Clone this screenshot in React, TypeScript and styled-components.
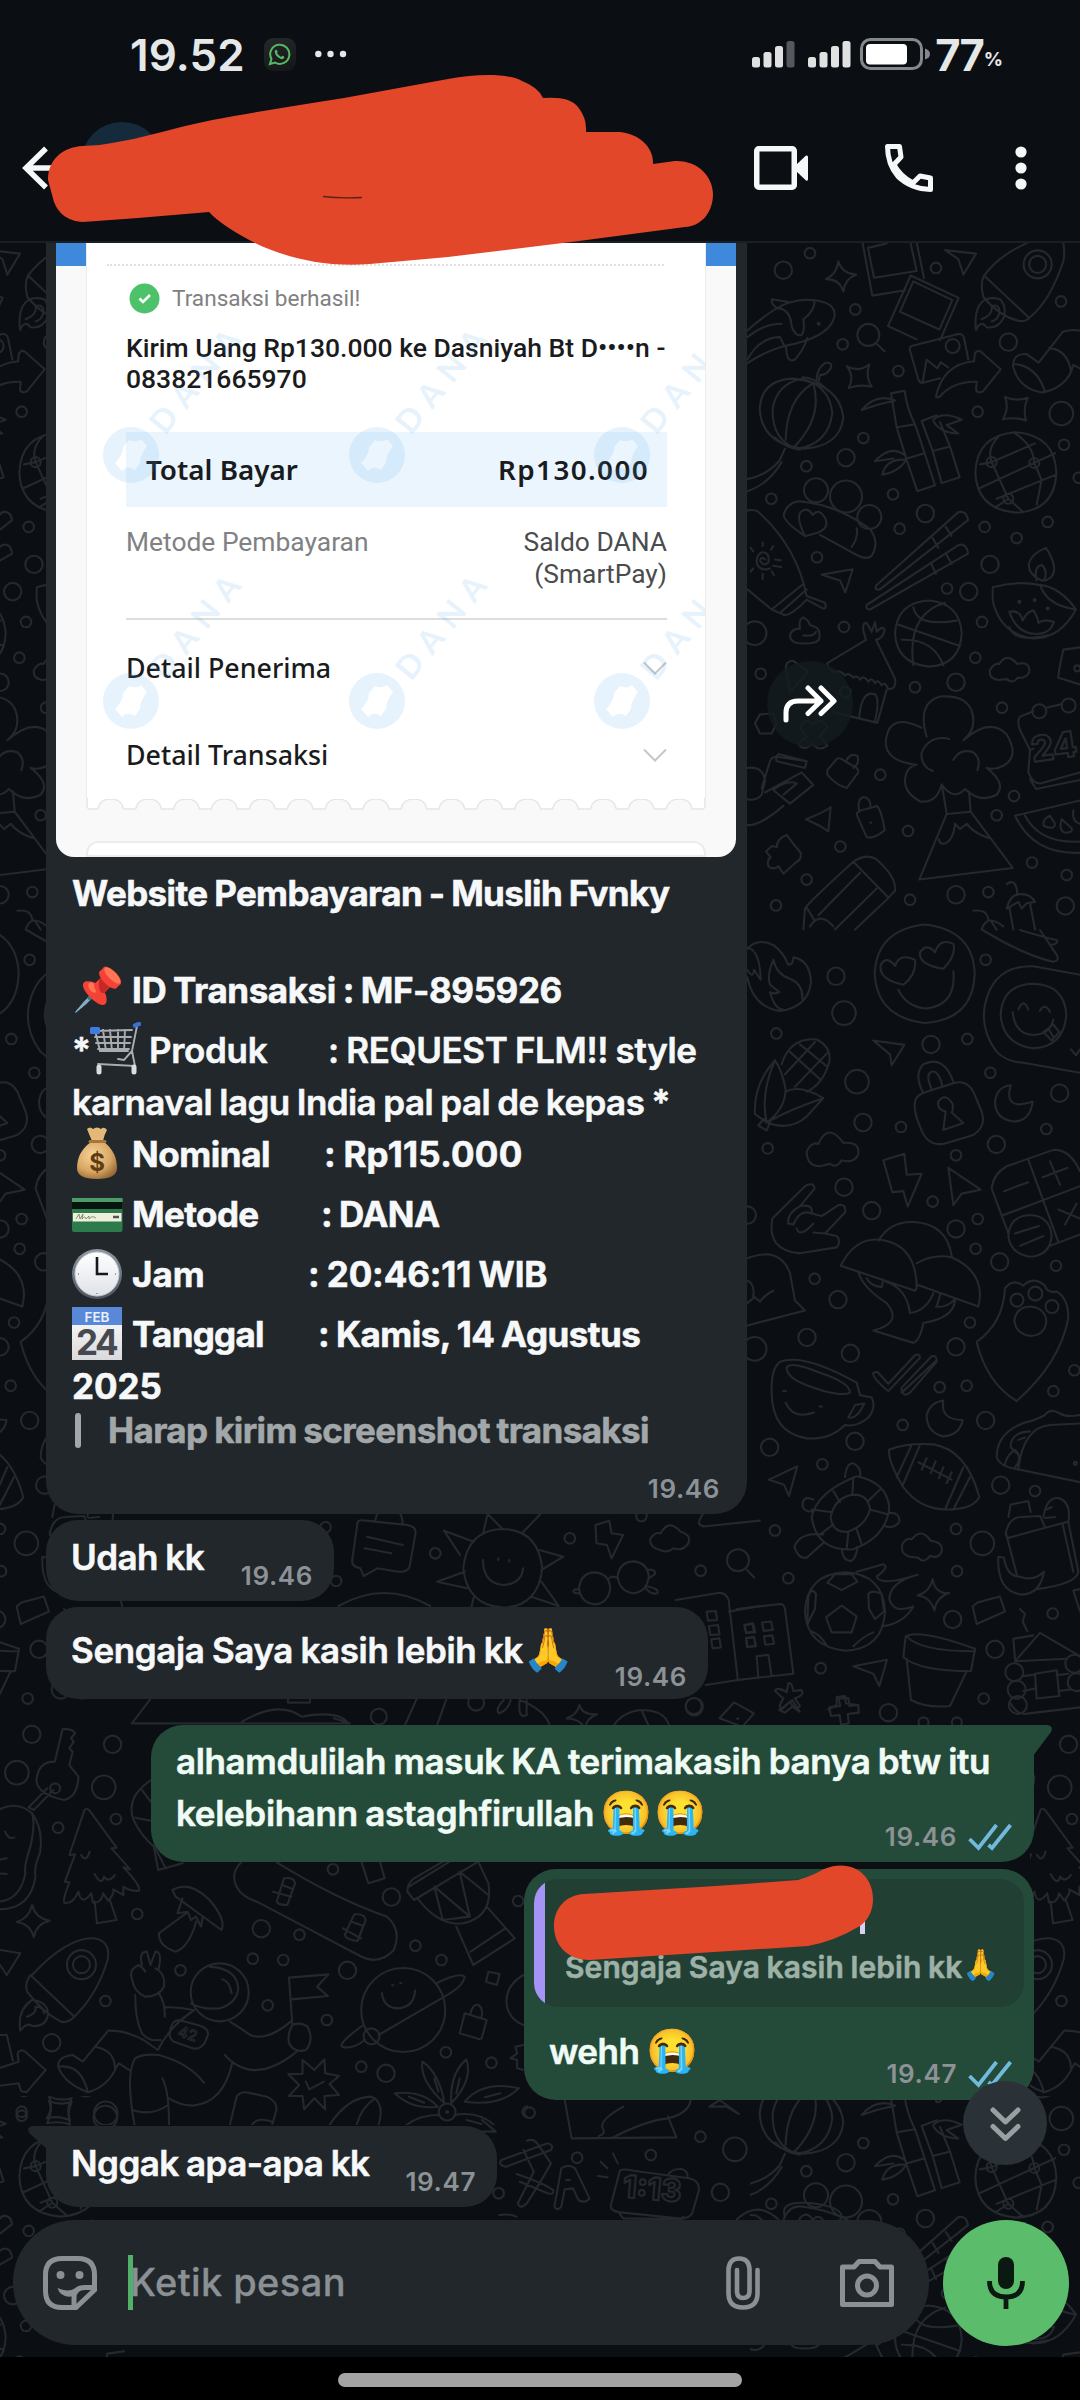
import React from "react";
import styled, { createGlobalStyle } from "styled-components";

const Global = createGlobalStyle`
  * { box-sizing: border-box; }
  body { margin: 0; background: #0b0f14; }
`;

const INTER = `Inter, "Liberation Sans", sans-serif`;

/* ---------- page ---------- */

const Phone = styled.div`
  position: relative;
  width: 1080px;
  height: 2400px;
  overflow: hidden;
  display: flex;
  flex-direction: column;
  background: #0b0f14;
  font-family: ${INTER};
`;

const StatusBar = styled.div`
  height: 108px;
  padding: 0 77px 0 130px;
  display: flex;
  justify-content: space-between;
`;

const StatusGroup = styled.div<{ $gap: number }>`
  display: flex;
  align-items: center;
  height: 108px;
  gap: ${(p) => p.$gap}px;
`;

const Clock = styled.span`
  font-size: 44px;
  font-weight: 600;
  line-height: 54px;
  letter-spacing: 0.1px;
  color: #e6e8e8;
  margin-top: 2px;
`;

const AppChip = styled.div`
  width: 32px;
  height: 33px;
  border-radius: 9px;
  display: flex;
  align-items: center;
  justify-content: center;
  background: linear-gradient(160deg, #262829, #131516);
`;

const Level = styled.div`
  display: flex;
  align-items: baseline;
  height: 54px;
  margin: 2px 0 0 -1px;
`;

const LevelNumber = styled.span`
  font-size: 43.5px;
  font-weight: 700;
  line-height: 54px;
  letter-spacing: -2px;
  color: #e6e8e8;
`;

const LevelSign = styled.span`
  font-size: 19px;
  font-weight: 700;
  color: #e6e8e8;
  transform: translateY(-5px);
  margin-left: 1px;
`;

const Header = styled.header`
  height: 135px;
  padding: 0 53px 14px 21px;
  display: flex;
  align-items: center;
  border-bottom: 2px solid #1a1f23;
`;

const Avatar = styled.div`
  width: 82px;
  height: 82px;
  border-radius: 50%;
  background: #152b3b;
  margin: -10px 0 0 20px;
`;

const HeaderActions = styled.div`
  display: flex;
  align-items: center;
  margin-left: auto;
`;

const Chat = styled.main`
  position: relative;
  height: 2114px;
  display: flex;
  flex-direction: column;
  background: #0b0e13;
`;

const Wallpaper = styled.svg`
  position: absolute;
  inset: 0;
`;

const Messages = styled.section`
  position: relative;
  height: 1977px;
  display: flex;
  flex-direction: column;
`;

const Row = styled.div<{ $top?: number; $mine?: boolean }>`
  position: relative;
  display: flex;
  margin-top: ${(p) => p.$top ?? 0}px;
  padding: 0 46px;
  justify-content: ${(p) => (p.$mine ? "flex-end" : "flex-start")};
`;

const Bubble = styled.div<{ $w: number; $h: number; $mine?: boolean; $corners?: string; $pad?: string; $row?: boolean }>`
  position: relative;
  width: ${(p) => p.$w}px;
  height: ${(p) => p.$h}px;
  padding: ${(p) => p.$pad ?? "0"};
  border-radius: ${(p) => p.$corners ?? "32px"};
  background: ${(p) => (p.$mine ? "#244a39" : "#22272b")};
  display: flex;
  flex-direction: ${(p) => (p.$row ? "row" : "column")};
  justify-content: ${(p) => (p.$row ? "space-between" : "flex-start")};
`;

const Tail = styled.svg<{ $side: "left" | "right" }>`
  position: absolute;
  top: 0;
  ${(p) => p.$side}: -19px;
`;

/* ---------- text ---------- */

const Line = styled.div<{ $h?: number; $margin?: string }>`
  height: ${(p) => p.$h ?? 52}px;
  margin: ${(p) => p.$margin ?? "0"};
  display: flex;
  align-items: flex-end;
  white-space: pre;
`;

const Words = styled.span<{ $w?: number; $bold?: boolean; $ls?: number; $color?: string; $size?: number; $lh?: number }>`
  width: ${(p) => (p.$w ? `${p.$w}px` : "auto")};
  flex: none;
  font-size: ${(p) => p.$size ?? 35}px;
  line-height: ${(p) => p.$lh ?? 52}px;
  font-weight: ${(p) => (p.$bold ? 740 : 640)};
  letter-spacing: ${(p) => (p.$ls ?? 0) - 0.03}px;
  word-spacing: -1px;
  color: ${(p) => p.$color ?? "#f6f8f9"};
  -webkit-text-stroke: 0.55px currentColor;
  white-space: pre;
`;

const Emoji = styled.span<{ $size?: number; $w?: number; $gap?: number; $drop?: number }>`
  width: ${(p) => p.$w ?? 52}px;
  flex: none;
  margin-right: ${(p) => p.$gap ?? 8}px;
  font-family: "Noto Color Emoji", ${INTER};
  font-size: ${(p) => p.$size ?? 42}px;
  line-height: 52px;
  letter-spacing: 0;
  transform: translateY(${(p) => p.$drop ?? 0}px);
`;

const EmojiArt = styled.span<{ $gap?: number }>`
  flex: none;
  width: 51px;
  height: 54px;
  margin-right: ${(p) => p.$gap ?? 9}px;
  display: flex;
`;

const Meta = styled.div<{ $top?: number; $right?: number }>`
  align-self: flex-end;
  flex: none;
  display: flex;
  align-items: center;
  gap: 11px;
  height: 32px;
  margin-top: ${(p) => p.$top ?? 0}px;
  margin-right: ${(p) => p.$right ?? 0}px;
  font-size: 26px;
  line-height: 32px;
  font-weight: 600;
  letter-spacing: 0.6px;
  color: #8c9296;
`;

const Caption = styled.div`
  display: flex;
  flex-direction: column;
  padding: 10px 0 0 26px;
`;

const QuoteLine = styled.div`
  display: flex;
  align-items: center;
  gap: 27px;
  height: 36px;
  padding-left: 3px;
`;

const QuoteBar = styled.i`
  width: 6px;
  height: 35px;
  border-radius: 3px;
  background: #a2a7a9;
`;

const Reply = styled.div`
  display: flex;
  height: 128px;
  margin: 10px 10px 0;
  border-radius: 24px;
  overflow: hidden;
  background: #223f33;
`;

const ReplyBar = styled.i`
  width: 11px;
  background: #a594f5;
`;

const ReplyText = styled.div`
  display: flex;
  align-items: flex-end;
  padding: 0 0 19px 20px;
`;

const ForwardButton = styled.button`
  width: 86px;
  height: 86px;
  margin: 418px 0 0 20px;
  padding: 0;
  border: 0;
  border-radius: 50%;
  background: rgba(19, 28, 32, 0.82);
  display: flex;
  align-items: center;
  justify-content: center;
`;

const ScrollDown = styled.button`
  position: absolute;
  right: 33px;
  top: 1838px;
  width: 84px;
  height: 84px;
  padding: 4px 0 0;
  border: 0;
  border-radius: 50%;
  background: #2a3238;
  display: flex;
  align-items: center;
  justify-content: center;
`;

/* ---------- receipt ---------- */

const Receipt = styled.div`
  width: 680px;
  height: 614px;
  margin: 0 0 0 10px;
  border-radius: 0 0 18px 18px;
  overflow: hidden;
  background: linear-gradient(#3f89dd 0 23px, #f9f9f9 23px);
  display: flex;
  flex-direction: column;
  font-family: Roboto, sans-serif;
  color: #1a1b1d;
`;

const Paper = styled.div`
  position: relative;
  width: 620px;
  height: 557px;
  margin-left: 30px;
  padding: 0 38px 0 39px;
  background: #fff;
  border: 1px solid #ececec;
  border-width: 0 1px;
  display: flex;
  flex-direction: column;
`;

const Watermark = styled.svg`
  position: absolute;
  left: 0;
  top: 0;
`;

const Dots = styled.div`
  height: 23px;
  margin: 0 3px 0 -19px;
  border-bottom: 2px dotted #e0e0e0;
`;

const Success = styled.div`
  position: relative;
  display: flex;
  align-items: center;
  gap: 12px;
  height: 32px;
  margin-top: 16px;
  padding-left: 3px;
  font-size: 22.6px;
  color: #7f8081;
`;

const Title = styled.div`
  position: relative;
  margin-top: 18px;
  font-size: 26.5px;
  font-weight: 500;
  line-height: 31px;
  white-space: pre;
`;

const Total = styled.div`
  display: flex;
  justify-content: space-between;
  align-items: center;
  height: 75px;
  margin-top: 38px;
  padding: 0 18px 2px 20px;
  background: #ebf5fe;
  font-family: "Noto Sans", sans-serif;
  font-weight: 600;
  font-size: 27.8px;
  line-height: 38px;
`;

const Amount = styled.span`
  letter-spacing: 1.4px;
`;

const Method = styled.div`
  position: relative;
  display: flex;
  justify-content: space-between;
  margin-top: 19px;
  margin-bottom: 1px;
  font-size: 26.4px;
  line-height: 32px;
  color: #808183;
`;

const MethodValue = styled.span`
  text-align: right;
  color: #4b4c4e;
`;

const Divider = styled.div`
  height: 2px;
  margin-top: 27px;
  margin-bottom: 4px;
  background: #dcdddd;
`;

const Detail = styled.div`
  position: relative;
  display: flex;
  align-items: center;
  justify-content: space-between;
  height: 87px;
  font-family: "Noto Sans", sans-serif;
  font-weight: 500;
  font-size: 26.8px;
`;

const NextPaper = styled.div`
  width: 620px;
  height: 20px;
  margin: 29px 0 0 30px;
  border: 2px solid #ececec;
  border-radius: 12px 12px 0 0;
  background: #fff;
`;

const Edge = styled.svg`
  display: block;
  flex: none;
  margin-left: 30px;
`;

/* ---------- composer ---------- */

const Composer = styled.footer`
  position: relative;
  display: flex;
  gap: 14px;
  padding: 0 11px 0 13px;
`;

const InputBox = styled.div`
  width: 916px;
  height: 125px;
  border-radius: 62px;
  background: #22272b;
  display: flex;
  align-items: center;
  padding: 0 35px 0 29px;
`;

const Caret = styled.i`
  width: 5px;
  height: 55px;
  margin: 0 -3px 0 30px;
  background: #53b069;
`;

const Placeholder = styled.span`
  flex: 1;
  font-size: 38px;
  font-weight: 540;
  line-height: 55px;
  color: #8a9094;
  letter-spacing: 0.4px;
  -webkit-text-stroke: 0.3px currentColor;
`;

const MicButton = styled.button`
  width: 126px;
  height: 126px;
  padding: 0;
  border: 0;
  border-radius: 50%;
  background: #5bbd6c;
  display: flex;
  align-items: center;
  justify-content: center;
`;

const NavBar = styled.div`
  height: 43px;
  background: #000;
  display: flex;
  justify-content: center;
  padding-top: 16px;
`;

const NavPill = styled.div`
  width: 404px;
  height: 14px;
  border-radius: 7px;
  background: #a4a4a4;
`;

const Redaction = styled.svg`
  position: absolute;
  left: 0;
  top: 0;
  pointer-events: none;
`;

/* ---------- wallpaper doodles ---------- */

type Ring = [number, number, number];

interface DoodleProps {
  x: number;
  y: number;
  sx: number;
  sy: number;
  paths: string;
  small?: number[][];
  medium?: number[][];
  large?: number[][];
  rings?: number[][];
}

function Doodles({ x, y, sx, sy, paths, small = [], medium = [], large = [], rings = [] }: DoodleProps) {
  const all: Ring[] = [
    ...small.map((c) => [c[0], c[1], 5.3] as Ring),
    ...medium.map((c) => [c[0], c[1], 8.7] as Ring),
    ...large.map((c) => [c[0], c[1], 11.8] as Ring),
    ...rings.map((c) => [c[0], c[1], c[2]] as Ring),
  ];
  return (
    <g transform={`translate(${x} ${y})`}>
      <path d={paths} transform={`scale(${sx} ${sy})`} vectorEffect="non-scaling-stroke" />
      {all.map((c, i) => (
        <circle key={i} cx={c[0] * sx} cy={c[1] * sy} r={c[2]} />
      ))}
    </g>
  );
}

const TOP_PATHS = `
M368 30L397 147L495 135M552 108L530 28M384 40L402 107L530 92L512 30M384 40L440 30
M512 102L656 152L600 247M512 102L444 215L530 245M520 115L637 157L598 223L480 183Z
M515 260Q505 262 512 275L535 335Q540 345 555 341L600 332M515 260L655 233Q668 232 672 242L685 290M548 340L560 290L592 310L602 296L625 308
M588 372Q610 300 702 294L705 276Q712 268 722 272L782 312L728 362Q712 366 708 358L710 340Q640 338 598 374Q588 376 588 372Z
M295 70Q305 97 348 100Q315 108 310 138Q300 110 257 110Q290 100 295 70Z
M320 305Q355 320 388 301Q375 328 395 351Q360 345 326 354Q345 328 320 305Z
M795 374Q828 385 863 376Q848 400 858 427Q828 418 789 424Q808 398 795 374Z
M615 45L708 53L670 100L655 65Z
M860 30Q780 55 732 102Q720 120 730 150Q780 195 840 204Q860 205 870 195Q930 160 970 70Q975 50 970 30M732 102L868 197M738 155Q700 170 708 224Q722 200 740 218Q775 222 792 195Q800 170 780 155Q755 150 738 155ZM725 200Q760 190 755 170Q780 165 778 185Q775 200 755 205
M1020 225Q990 222 968 228L896 297L860 278Q820 275 819 305Q835 355 905 364Q970 355 993 318L1000 302L1020 310M928 264Q985 270 993 318M822 300Q890 305 914 360
M22 225Q60 200 96 182Q160 150 230 158Q290 165 283 195Q270 235 165 255Q90 265 22 298M96 155Q92 165 110 175Q150 175 155 215Q165 240 185 235Q195 225 190 200Q225 180 223 160M96 155L150 162M22 240Q70 210 125 210M22 290Q60 240 120 240L132 258M138 262Q140 300 165 290Q190 270 202 242
M410 255L434 272
M59 400Q65 335 160 333Q300 345 310 420Q300 485 190 490Q65 480 59 400ZM98 400Q110 345 185 333Q270 350 277 410Q265 480 170 490Q95 470 98 400ZM220 345Q250 420 160 488M215 345Q140 380 137 470M230 335Q230 310 255 298Q280 295 272 310Q260 325 240 325L236 338M188 330Q220 330 258 355M105 465Q140 490 180 492M135 490L118 517Q80 550 22 558M125 520Q85 570 22 585
M365 403Q410 365 465 382L410 392ZM453 366L494 360Q500 400 525 435L554 500L585 572L532 585L500 515L470 442ZM470 442L525 435M500 512L554 500M494 504Q450 480 405 518L460 512M500 515Q440 510 427 548Q470 545 500 515M545 428L590 415M545 428L578 495L605 567L659 554L630 485L600 430M578 495L630 485M580 425Q610 405 665 425L620 437L655 456Q600 455 580 428
M706 543Q710 460 827 453Q945 460 949 543Q945 630 827 633Q710 625 706 543ZM720 578L945 500M770 602L948 548M755 520L885 478M755 520L805 602L850 632M883 522L905 560L890 615M883 522Q880 480 820 453M755 520Q740 490 775 463M720 525L755 520M805 602L765 622
M190 683Q125 650 132 635Q150 600 200 610Q300 620 390 670Q420 700 395 730Q380 740 350 728L240 683M350 668Q355 690 335 710M195 686Q165 640 185 630Q205 620 218 638Q240 620 258 650Q265 670 232 678Z
M22 628Q50 625 60 635Q170 710 200 820L255 835Q262 848 250 848L200 828M22 805L95 850L135 863Q160 860 200 828M95 850L190 793M120 858L200 805M68 700L68 708M68 770L68 782M32 712L40 720M100 708L93 716M105 738L122 740M100 752L123 755M32 765L40 758M95 765L102 773M75 738Q65 730 60 740Q70 755 85 745Q90 720 65 722Q45 730 52 750Q65 765 90 758
M410 795L655 632Q680 628 684 650L420 805Q400 808 410 795M380 840L655 706Q680 700 684 725L390 850Q376 850 380 840M578 690L595 712M617 665L635 685M572 745L588 770M618 725L635 748
M245 772L338 760L316 812L300 785Z
M188 868Q205 872 210 885Q240 890 238 905Q245 928 195 926Q150 928 150 908Q155 893 180 893Q175 875 188 868ZM190 908Q220 912 228 900
M465 904Q470 835 565 830Q660 835 665 904Q660 975 565 978Q470 970 465 904ZM472 883L660 932M520 975Q500 860 615 835M610 975Q580 915 485 918M520 845Q530 890 650 875
M758 800Q830 785 900 795Q960 800 1008 850Q960 915 880 915Q780 905 758 830ZM900 795Q920 840 1005 850M905 785Q860 770 868 745Q875 725 918 712Q960 760 930 780Q915 787 905 785M890 785Q880 755 905 750Q925 765 912 785M808 855Q840 850 848 875Q860 855 880 852Q895 870 895 880Q915 870 942 878Q930 905 890 905Q830 905 808 855ZM808 890Q825 925 925 908
M262 970L378 918Q360 880 380 880L395 900L405 878L410 900Q430 885 434 895Q430 915 408 918L465 1005Q470 1030 445 1028Q435 1010 425 1020Q415 1005 405 1015Q395 1000 385 1012Q370 995 360 1007Q350 995 340 1003Q325 990 315 998Q300 985 285 990Q262 985 262 970M440 1030L412 1104L280 1080M358 1090Q365 1030 405 1040Q420 1050 405 1100
M775 1008Q745 1005 750 985Q765 968 778 972Q800 945 832 972Q870 965 868 990Q860 1005 832 1003Q820 1018 800 1006Z
M1020 935L970 940Q955 990 955 1003L1020 1018
M840 1090L880 1078M918 1070L965 1062M840 1090Q830 1100 840 1120L870 1165L865 1215Q878 1240 900 1240L1020 1215M870 1165L880 1162M870 1230L888 1252L1020 1232
M560 1135Q530 1060 600 1045Q700 1040 700 1100Q700 1125 670 1143Q750 1090 800 1130Q840 1180 790 1200Q765 1210 740 1205Q800 1240 770 1265Q720 1285 675 1252Q640 1280 605 1242Q590 1285 540 1280Q480 1255 500 1215Q510 1200 530 1198Q430 1190 438 1140Q450 1080 545 1115M578 1212Q540 1200 545 1170Q570 1130 628 1140M640 1187Q660 1160 700 1170Q725 1185 712 1210
M607 1248L620 1308L538 1455L818 1429L692 1303L687 1258M620 1308L692 1303M597 1365Q598 1375 610 1375Q640 1370 645 1330L660 1342L680 1330Q700 1350 745 1362
M1020 1278L825 1312Q880 1400 1020 1395M855 1312Q900 1375 1020 1370M930 1312Q905 1320 912 1335Q945 1345 945 1330ZM965 1320Q955 1345 975 1350Q1000 1350 995 1340ZM1000 1300Q995 1325 1020 1330
M78 1392L95 1380L110 1382Q112 1362 140 1355L160 1375L182 1395Q185 1410 170 1415L130 1442L115 1425Q100 1435 85 1425Q80 1410 92 1405Z
M350 1310Q350 1300 380 1297L410 1290Q425 1300 434 1345Q400 1365 380 1360ZM358 1303Q350 1275 370 1270Q392 1272 392 1292M391 1327L393 1328
M262 1210L290 1185Q300 1180 315 1190L350 1205Q360 1215 350 1220L320 1250Q290 1245 262 1220ZM318 1190Q330 1170 352 1178Q360 1195 340 1205
M198 1320Q250 1305 272 1293L265 1347L240 1335Z
M190 1567L195 1520Q200 1510 340 1415Q380 1395 410 1410Q470 1450 465 1480L440 1500L345 1567M200 1518L225 1548M340 1415L445 1495M235 1535L360 1440M285 1567L410 1475M210 1560Q240 1525 280 1560
M45 1105L60 1085L100 1083L110 1105L95 1128L60 1128Z
M138 985Q135 965 160 965L205 990L150 1035ZM180 1115Q195 1090 218 1108Q240 1090 262 1112L240 1135L262 1155Q235 1170 218 1150Q190 1170 175 1150L200 1135Z
M65 1250L90 1190Q95 1180 110 1180L200 1190L195 1205L110 1190Q105 1180 115 1174L200 1190M75 1260L185 1215L220 1243L150 1285L100 1255Q140 1230 170 1240L130 1265M22 1205Q70 1200 75 1235L65 1265Q50 1280 22 1275M22 1333Q60 1335 130 1290
M800 1465Q830 1450 832 1490M800 1520Q810 1490 835 1488Q870 1485 885 1505L860 1508L845 1520L835 1505ZM808 1518L820 1567M870 1508L885 1567M700 1525Q740 1520 745 1545M725 1567Q740 1530 790 1560M755 1550L770 1567`;

const MID_PATHS = `
M22 38Q50 15 100 30Q130 45 145 70Q160 70 160 55Q210 60 213 105Q205 155 120 163Q40 155 22 95M22 35Q60 40 62 100L42 80Q40 100 22 80M100 60Q110 90 150 98Q190 110 187 138M100 60Q80 90 90 110L118 125Q100 130 90 125Q105 160 130 160
M105 262Q40 310 45 370L80 387Q135 360 137 320Q125 280 105 262M80 387Q60 330 105 262M80 387Q150 405 200 375L250 338Q180 310 137 325M80 387Q150 360 250 338M125 270Q150 215 230 220Q275 235 268 265Q250 310 200 325M150 245L240 300M180 230L262 275M135 290L225 225M165 315L265 245M55 393L80 403L90 387L70 380Z
M404 88Q410 0 554 -11Q700 0 704 88Q700 180 554 187Q410 175 404 88ZM475 120Q500 155 560 158Q650 150 640 83M490 110Q415 100 422 70Q440 50 465 72Q480 45 525 60Q530 90 490 110ZM610 78Q535 70 540 45Q560 25 585 45Q600 15 640 28Q650 50 610 78Z
M728 0Q850 50 940 64Q960 62 950 50L900 0M840 0Q940 20 950 20Q955 30 930 30
M1020 90L880 73Q760 70 735 150Q720 200 770 245Q800 265 850 267L1020 287M782 172Q785 110 880 108Q975 110 979 172Q970 235 880 238Q790 230 782 172ZM818 165Q825 210 880 211Q930 210 940 180M835 160Q850 135 865 160M900 162Q915 145 930 165M910 205L940 190L958 205L935 222ZM925 198L940 215M993 240L1008 252L1020 240
M400 222L493 231L455 272L450 250Z
M525 345Q520 365 540 395Q560 435 610 430L700 412Q740 395 725 365L700 325Q680 300 640 308L560 325Q530 330 525 345ZM550 328Q520 290 550 270Q610 250 640 305M575 320Q555 290 575 285Q595 280 608 315M610 402L617 365Q590 360 595 345Q615 325 638 350Q640 362 635 367L670 388Z
M812 312Q790 365 878 345Q870 385 820 385Q765 380 765 345Q770 315 812 312ZM610 946Q600 985 668 985Q660 1015 610 1018Q560 1010 560 975Q570 950 610 946Z
M240 475Q200 475 200 445Q215 425 235 430Q265 385 310 428Q360 425 355 450Q345 470 305 463Q290 480 270 470ZM510 1260Q480 1255 487 1235Q500 1220 515 1225Q545 1200 572 1228Q610 1230 605 1250Q595 1265 570 1258Q550 1275 535 1262Z
M430 463L493 450L500 492L545 490L503 556L490 525L457 527Z
M625 478L722 522L665 530L640 553Z
M180 650Q80 645 97 580L195 515Q220 505 224 520L180 555Q220 550 215 570L245 575L295 553Q320 550 315 568L255 610L290 615Q305 625 290 638ZM145 590Q140 570 180 555M145 590L160 592Q180 560 215 570M170 600Q180 620 220 590M220 608L255 610
M755 520Q760 490 800 475L940 442Q990 440 1020 485M755 520L805 610M790 573L1020 515M865 462L955 627M930 635L1020 612M805 615Q808 575 870 573Q930 575 935 615Q930 655 870 657Q810 650 805 615ZM825 610L897 595M840 635L910 615M792 525L865 507M908 497L983 478M930 465L960 512M955 562L1020 580M1010 550L975 592
M302 675Q350 610 440 625Q530 640 530 720L525 725ZM415 625Q450 585 520 587Q620 590 635 655M530 670Q580 650 635 658Q740 690 715 757L532 713M355 688Q370 720 440 750Q490 790 400 805L520 830Q540 825 550 790Q640 780 645 745M437 707Q500 720 510 770Q560 765 580 730M380 700Q390 715 425 718L428 708M590 757L602 730M588 757Q620 760 645 742
M22 660Q120 635 150 690L165 745L195 765L22 795M22 705Q45 710 40 740L22 750M38 735L60 747Q80 730 100 725
M120 868Q190 850 350 910L360 935L395 940Q410 960 385 980Q350 1000 315 995Q270 1025 200 1022Q90 1010 95 920Q95 880 120 868ZM140 880Q150 865 240 890Q330 910 330 930Q300 940 200 915Q140 900 140 880ZM325 980L345 955L373 952Q350 985 325 980M137 950Q160 985 222 970M130 927L138 927M238 958L246 958
M400 890Q395 900 445 927L540 860Q540 850 525 855L445 912L412 888ZM485 930L590 865Q590 855 575 857L485 920ZM485 925Q490 940 510 930L590 868
M710 828Q790 790 795 720Q820 700 850 715Q880 695 915 715Q920 730 950 727Q985 740 985 780Q960 870 830 947Q740 910 710 828ZM823 786Q828 758 871 757Q915 760 919 786Q915 815 871 816Q828 812 823 786Z
M447 1045Q500 1030 580 1034Q680 1045 718 1140Q700 1165 620 1165Q540 1165 490 1120Q445 1070 447 1045ZM515 1035L470 1100M540 1035L487 1118M670 1080L617 1162M690 1100L640 1165M535 1070L635 1105M560 1062L545 1085M587 1068L572 1092M610 1080L597 1102M635 1090L620 1112
M1020 975Q980 980 960 972Q930 960 915 975Q890 985 855 990Q770 1010 770 1060Q780 1080 840 1085L1020 1110M835 1083Q850 1000 930 995L1020 992M795 1075Q800 1055 825 1045Q850 1060 825 1080M870 1008Q810 1010 812 1040L835 1055M835 1025L855 1020
M87 1105L172 1078L147 1138L132 1115Z
M215 1180Q230 1130 350 1098Q440 1110 448 1160Q440 1220 340 1245Q230 1250 215 1180ZM272 1180Q285 1140 340 1135Q385 1135 390 1165Q375 1200 320 1210Q275 1210 272 1180ZM280 1128L300 1150M340 1100L337 1135M420 1125L385 1148M445 1175L390 1165M365 1235L350 1205M320 1245L325 1212M240 1215L280 1195M215 1165L272 1170M315 1100Q320 1070 340 1072Q365 1080 360 1100M220 1145Q185 1135 188 1160Q200 1172 218 1168M448 1172Q480 1170 478 1190Q460 1205 435 1198M250 1215Q180 1210 163 1240Q175 1265 200 1262L250 1232M305 1245Q310 1270 335 1268Q350 1260 352 1240
M195 1370Q200 1295 315 1291Q430 1295 435 1370Q430 1445 315 1449Q200 1440 195 1370ZM258 1382L305 1358L350 1380L335 1412L275 1412ZM262 1312L305 1327L352 1310L335 1295L285 1295ZM385 1335Q395 1325 425 1335L432 1370L405 1385L387 1365ZM202 1395L205 1340Q215 1320 228 1335L225 1365ZM215 1410Q240 1415 262 1440M340 1440Q370 1420 400 1412M350 1290L430 1275Q450 1280 410 1300Q420 1320 533 1296Q450 1310 448 1345Q460 1375 520 1360Q490 1395 425 1400
M578 1305Q585 1335 628 1333Q590 1340 583 1368Q570 1340 533 1338Q570 1330 578 1305Z
M797 1215Q805 1180 845 1180L900 1178L915 1200M805 1222L980 1190M797 1210L832 1300M968 1195L1000 1290M910 1180Q920 1140 955 1142Q995 1150 985 1190L1015 1290Q1010 1315 890 1325M935 1160L920 1165M945 1180L915 1182M805 1180L812 1155L865 1148L872 1170M775 1260Q770 1330 845 1336Q900 1335 912 1290Q880 1310 840 1300Q800 1300 792 1262Z
M698 1360L712 1352L780 1340L795 1370L710 1395Z
M1020 1325L1000 1328L1020 1370
M-10 1365L120 1355Q132 1355 135 1365L160 1495L-10 1508M13 1397L40 1395L46 1412L18 1413ZM66 1392L93 1390L99 1407L71 1409ZM18 1423L43 1422L48 1440L22 1441ZM72 1420L97 1418L102 1435L76 1437ZM50 1460L85 1457L95 1500M50 1460L55 1504
M340 1480L441 1467L418 1520L400 1495Z
M497 1420Q540 1405 705 1445L693 1490Q540 1490 490 1462ZM500 1465L513 1548Q560 1565 630 1560L680 1490M500 1420Q540 1450 705 1450
M820 1425L880 1418M825 1470L900 1413L1020 1460M820 1425L825 1465M825 1470L980 1465M885 1495L950 1488L958 1540L890 1545ZM850 1500L885 1497M850 1530L885 1525M950 1498L985 1495M955 1530L990 1527M840 1365L855 1375L848 1390L862 1410
M105 1530Q110 1520 140 1532L145 1515Q155 1510 160 1530L185 1528Q195 1538 165 1545L180 1560Q170 1570 150 1552L125 1567Q112 1562 130 1545ZM265 1567L290 1558L290 1542L315 1540L318 1555L355 1558`;

const LOW_PATHS = `
M162 125L185 28Q215 25 222 40L210 55L218 65L205 85L215 95L205 135L232 170Q230 230 190 240Q115 225 108 185Q110 125 162 125ZM158 210L100 270L85 262L140 205
M-5 270Q50 240 95 280Q105 310 90 380Q70 440 75 460Q60 540 -5 545M95 280Q130 330 118 400Q100 440 105 470Q90 570 -5 568M15 335Q25 360 42 352M-5 420L20 415M-5 460L20 462
M250 270L205 405L222 403L192 485L205 487Q185 540 190 548Q215 555 232 515Q240 560 270 520L275 548Q300 550 305 520L320 542Q340 520 335 508L365 525L365 500Q385 515 412 512Q415 495 365 442L385 448L330 385L345 383L265 272Q257 262 250 270ZM280 545L287 610L345 600L325 540M240 405Q255 430 265 395M280 462Q300 500 308 470Q320 490 340 465
M95 555Q105 595 147 602Q108 610 100 652Q90 612 50 606Q85 595 95 555Z
M450 178Q370 230 395 300Q420 350 455 380L468 450L540 430M400 293L450 303M420 210L450 250M455 375L490 445
M715 425Q680 460 700 500Q715 530 760 545L1060 705Q1120 740 1165 690Q1190 630 1145 590Q1000 540 820 428M840 475Q870 470 873 490L850 555Q815 555 820 540ZM808 515L862 530M835 495L868 508M1048 583Q1080 580 1082 600L1058 663Q1025 660 1020 645ZM1015 625L1068 655M1040 605L1075 618
M510 510Q560 480 620 540Q670 600 655 630L520 530ZM540 535L525 580L555 575L565 600L580 590L595 620L600 590M550 580L470 640Q470 680 520 695Q560 680 580 605
M1205 515L1225 540L1410 428M1205 515Q1205 490 1225 475L1310 425M1210 500L1330 425M1235 535Q1300 620 1370 610Q1460 590 1445 490L1415 425M1285 500L1310 600L1390 590L1360 455L1445 525M1285 500L1390 590M1350 620L1400 735L1523 655L1440 560M1392 695L1495 625M1070 428L1090 490L1138 475L1125 428
M95 765Q200 650 280 655Q330 665 318 720Q290 820 220 890Q200 910 180 905Q130 880 80 815Q72 790 90 765ZM90 765L220 890M95 840Q50 870 60 932Q80 905 95 918Q140 920 142 880Q140 845 95 840ZM80 890Q110 880 105 860Q130 860 130 880
M0 690L60 700L20 765L0 735
M390 775Q380 750 410 735Q425 745 430 755M420 735Q410 695 435 695L445 735L460 695Q480 695 470 745M460 745Q490 760 485 800Q470 830 430 830Q395 815 390 775M400 825Q400 900 420 940Q440 965 475 960M470 820Q490 850 487 890M487 862Q530 860 570 870M658 778Q680 785 685 820M565 850Q600 870 650 865Q700 850 705 805Q700 745 620 740M575 870Q500 920 467 990L425 960Q370 930 320 932L245 1025L215 1005Q170 1010 172 1040Q190 1090 260 1117Q320 1100 345 1040L352 1030L385 1052M280 980Q340 990 340 1045M172 1040Q240 1030 260 1117M680 905Q720 930 740 945Q790 965 860 905M865 915Q850 940 855 970Q870 1000 905 990Q930 960 910 920Q890 905 865 915M878 995Q750 1100 665 1005M687 1030Q660 1150 570 1157Q530 1155 500 1135M398 1215Q370 1060 400 1015Q420 1000 470 1005Q560 1030 603 1088M480 1075Q500 1110 500 1215M390 1170Q450 1190 497 1155M530 900L595 918Q618 928 615 945L605 970Q590 990 570 985L515 965Q498 955 503 935Q508 900 530 900Z
M865 915L855 773L972 763L938 800L970 828L862 838
M1290 790Q1360 755 1375 770Q1370 800 1315 830L1120 945M1075 915Q1000 970 1012 980Q1040 990 1080 960M1130 820Q1135 865 1180 865Q1225 860 1228 812M1160 795L1163 796M1184 789L1187 790
M1375 880L1440 900L1425 955Q1420 960 1410 955L1360 940ZM1392 880Q1400 850 1415 855Q1430 865 1425 890M1445 755L1478 762L1470 795L1438 785Z
M-5 1045L55 1025L52 1000Q60 985 75 995L135 1050L80 1115Q60 1118 60 1105L55 1090L-5 1098M-5 945L20 945L38 1022
M145 1130Q178 1145 212 1135Q195 1165 207 1202Q175 1185 138 1195Q160 1165 145 1130Z
M895 1020L930 1050L960 1018L962 1060L1003 1068L975 1092L1003 1125L960 1128L962 1168L930 1135L900 1168L895 1128L855 1128L885 1095L853 1062L895 1062ZM905 1085L915 1108L958 1085
M1315 1150Q1240 1080 1250 1025Q1300 1060 1315 1150M1335 1150Q1330 1060 1380 1018Q1400 1080 1335 1150M1375 1145Q1430 1080 1535 1105Q1480 1160 1375 1145M1295 1160Q1220 1170 1168 1120Q1250 1110 1295 1160M1345 1185Q1430 1170 1480 1235L1420 1230M1200 1217Q1240 1185 1295 1185M1285 1075L1297 1115M1360 1075L1350 1120M1210 1130L1255 1148M1435 1132L1480 1120M1380 1200L1425 1212
M680 1215L700 1130Q710 1115 730 1117L790 1130Q820 1145 818 1170L805 1215M745 1215Q760 1190 805 1205M975 1215Q1030 1130 1100 1130Q1140 1150 1120 1215M1055 1215Q1070 1160 1110 1135
M1548 765Q1490 800 1500 860Q1510 900 1548 915M1548 975L1525 980L1530 1000L1510 1015L1530 1020L1530 1045L1548 1050`;

const GAP_PATHS = `
M692 65Q695 58 710 62L800 75Q820 80 818 100L805 200Q800 218 780 215L735 205L705 228L698 205Q678 200 680 180ZM712 110L790 135M707 145L765 160M730 62Q735 25 760 15Q790 30 790 72
M922 205Q930 90 1008 87Q1085 90 1094 205Q1085 320 1008 323Q930 315 922 205ZM965 100L975 42L1008 88M945 125L880 92L915 165M925 215L865 245L930 265M945 290L940 320M1070 290L1130 318L1092 245M1088 150L1140 170L1092 210M1050 100L1090 42M965 180Q965 250 1010 255Q1050 250 1052 205M998 175L998 180M1022 180L1022 185
M1210 75L1240 62L1245 100L1270 105L1245 175L1235 135L1212 130Z
M1350 150Q1325 140 1330 115Q1340 95 1352 100Q1370 55 1395 95Q1420 105 1412 130Q1400 155 1380 145Q1365 160 1350 150Z
M1174 265Q1178 218 1208 217Q1240 220 1242 265Q1238 310 1208 313Q1178 308 1174 265ZM1258 230Q1262 186 1292 184Q1324 188 1326 230Q1322 276 1292 280Q1262 274 1258 230ZM1240 235Q1248 225 1258 235M1322 210Q1340 205 1340 222L1326 235M1318 258Q1350 265 1345 280Q1330 285 1318 262M1176 280Q1155 280 1165 268L1175 268
M1435 70Q1440 30 1470 30M1435 70Q1440 82 1455 78L1568 62
M1540 210L1555 232M1385 300L1480 278Q1495 280 1500 300L1520 540L1450 555M1452 335L1472 333L1475 360L1455 362ZM1457 378L1477 375L1480 403L1460 405ZM1462 418L1480 415L1483 442L1465 445ZM1500 335L1568 318M1535 375L1552 370L1555 395L1538 398ZM1538 415L1555 410L1558 438L1540 441Z
M650 318Q750 240 850 318M240 598L200 670L675 670L640 655M540 598L540 608L588 608L588 598M440 665Q520 600 570 650Q650 630 670 668M820 598L795 675M885 598L865 675M1045 600Q1100 630 1110 675M1010 600Q990 630 1000 640Q1020 630 1025 600M1045 600Q1040 660 1060 645L1060 600
M1175 615Q1180 645 1213 643Q1190 655 1187 685Q1175 655 1147 655Q1170 645 1175 615ZM1250 675Q1270 635 1310 630L1325 675M1310 630Q1360 630 1370 675
M1480 655L1512 607L1555 640L1530 680ZM1518 656L1521 656`;

const FOOT_PATHS = `
M820 0L830 115L982 112L970 50M905 20Q870 60 875 85Q880 100 870 108M890 112Q940 60 970 55Q1000 40 1003 0
M1030 20L1045 0L1073 42L1055 20Z
M728 180L795 130Q805 135 800 150L735 200Q722 195 728 180M765 122Q775 115 780 130L800 190Q790 230 765 310Q755 330 752 310L775 215L760 150M750 222Q790 250 803 270Q805 285 795 280L755 245M805 320L815 205Q825 190 835 205L856 295Q850 312 840 300L832 265L820 268L815 320Q808 335 805 320ZM822 240L828 240
M900 212Q905 205 920 212L1000 235Q1015 240 1015 270L1005 340Q1000 358 985 355L905 338Q885 335 887 315ZM970 225Q975 205 990 207Q1000 215 998 233M900 342L905 355L990 358L992 350M872 185L882 205M890 160L897 190M868 228L882 232
M725 345Q740 340 750 350M1070 358Q1100 300 1130 358M1140 350Q1130 300 1180 310Q1230 325 1220 358
M700 95L720 95L700 60`;

function TopGroup() {
  return (
    <>
      <Doodles
        x={740} y={230} sx={1 / 3} sy={1 / 2.24} paths={TOP_PATHS}
        small={[[210,52],[588,85],[346,178],[308,256],[475,316],[713,407],[370,466],[199,529],[94,602],[459,592],[479,669],[734,665],[830,690],[231,733],[621,803],[726,878],[312,889],[706,958],[62,994],[525,1024],[786,1070],[421,1220],[822,1268],[770,1311],[504,1346],[301,1381],[876,1417],[200,1455],[108,1513],[510,1500],[745,1483],[980,1445],[963,160],[972,481],[923,654],[1016,555],[316,1035]]}
        medium={[[130,90],[805,251],[318,510],[556,635],[750,749],[686,810],[648,1013],[648,1489],[976,1514]]}
        large={[[964,411],[44,903]]}
        rings={[[228,583,12],[318,597,16],[388,643,12],[638,260,7],[893,77,14],[893,77,8.5],[385,235,11],[755,520,5],[883,522,5],[805,602,5],[898,1078,7],[986,1065,7],[838,833,1],[884,829,1],[923,848,1],[236,210,1],[1012,982,3]]}
      />
      <Doodles
        x={740} y={930} sx={1 / 3} sy={1 / 2.0103} paths={MID_PATHS}
        small={[[109,208],[737,60],[682,219],[751,287],[83,439],[483,396],[919,400],[648,453],[578,546],[713,581],[707,641],[224,701],[948,675],[690,789],[599,919],[680,916],[940,927],[488,995],[247,1074],[885,1128],[105,1207],[648,1204],[145,1303],[651,1289],[938,1374],[242,1484],[731,1545],[1003,885]]}
        medium={[[288,93],[573,230],[369,387],[312,517],[395,564],[648,601],[769,431],[779,667],[959,328],[294,743],[201,819],[331,851],[648,838],[737,986],[89,1040],[345,1028],[782,1116],[638,1386],[765,1446],[22,573]]}
        large={[[312,167],[351,305],[44,842],[727,1233]]}
        rings={[[831,744,6.5],[886,731,7],[936,757,6.5],[823,1492,9],[830,1527,9],[1003,1475,9],[1010,1512,9],[1006,1072,1.5],[-6,1267,11]]}
      />
    </>
  );
}

function LowGroup() {
  return (
    <Doodles
      x={0} y={1720} sx={0.338} sy={1 / 3} paths={LOW_PATHS}
      small={[[343,297],[172,323],[406,582],[534,751],[886,644],[748,716],[838,720],[792,856],[967,900],[1229,677],[1306,720],[985,448],[1319,997],[1069,1040],[1454,1028],[64,1175],[312,843],[1533,543],[1561,1175]]}
      medium={[[94,43],[333,73],[773,626],[1158,531],[1028,751],[153,968],[1142,1060]]}
      large={[[50,158],[307,202],[313,1180]]}
      rings={[[163,205,5],[241,734,14.5],[241,734,8.5],[1193,870,42],[1099,949,8],[650,817,29],[1323,1176,8.5],[1323,1176,1]]}
    />
  );
}

function ChatWallpaper() {
  return (
    <Wallpaper width="1080" height="2114" viewBox="0 243 1080 2114">
      <defs>
        <clipPath id="foot"><rect x="0" y="2096" width="1080" height="270" /></clipPath>
        <clipPath id="footRight"><rect x="750" y="2096" width="330" height="270" /></clipPath>
        <clipPath id="lowLeft"><rect x="0" y="1715" width="528" height="410" /></clipPath>
        <clipPath id="lowRight"><rect x="1030" y="1712" width="50" height="388" /></clipPath>
      </defs>
      <g fill="none" stroke="#24292d" strokeWidth="2.1" strokeLinejoin="round" strokeLinecap="round">
        <TopGroup />
        <g transform="translate(-956 0)"><TopGroup /></g>
        <g clipPath="url(#footRight)"><g transform="translate(0 1705)"><TopGroup /></g></g>
        <g clipPath="url(#foot)"><g transform="translate(-956 1704)"><TopGroup /></g></g>
        <g clipPath="url(#lowLeft)"><LowGroup /></g>
        <g clipPath="url(#lowRight)"><g transform="translate(956 0)"><LowGroup /></g></g>
        <Doodles
          x={40} y={1500} sx={0.4591} sy={1 / 3} paths={GAP_PATHS}
          small={[[861,160],[1154,115],[1310,48],[1439,212],[645,243],[622,82]]}
          rings={[[738,650,8],[950,608,8],[1424,618,8]]}
        />
        <Doodles
          x={500} y={1700} sx={0.3699} sy={1 / 3}
          paths="M890 22L920 18L915 -5L942 -5L945 18L968 15L970 38L940 42L943 70L922 74L918 45L895 48ZM1380 10Q1400 50 1430 40L1568 22M755 30L790 0L810 35L790 20L770 38Z"
          rings={[[525,20,8.7],[1050,38,8.7],[1145,67,5],[1235,67,5],[1400,15,9]]}
        />
        <Doodles
          x={0} y={2100} sx={0.6887} sy={1 / 3} paths={FOOT_PATHS}
          small={[[838,173],[945,165],[769,38],[1017,110],[724,280]]}
          medium={[[1046,277]]}
          large={[[1067,148]]}
        />
        <text x={1033} y={762} fontSize={35} fontWeight={800} fontFamily="Inter" transform="rotate(-8 1033 762)">24</text>
        <text x={177} y={2036} fontSize={15} fontWeight={500} fontFamily="Inter" strokeWidth={1.1} transform="rotate(17 177 2036)">42</text>
        <text x={622} y={2197} fontSize={31} fontWeight={800} fontFamily="Inter" transform="rotate(5 622 2197)">1:13</text>
      </g>
    </Wallpaper>
  );
}

/* ---------- icons ---------- */

function Bars({ weak }: { weak?: boolean }) {
  return (
    <svg width="43" height="28" viewBox="0 0 43 28" fill="#e0e2e2">
      <rect x="0" y="17" width="8" height="10.5" rx="2.5" />
      <rect x="11.5" y="12" width="8" height="15.5" rx="2.5" />
      <rect x="23" y="6" width="8" height="21.5" rx="2.5" />
      <rect x="34.5" y="1" width="8" height="26.5" rx="2.5" fill={weak ? "#55595c" : undefined} />
    </svg>
  );
}

function Battery() {
  return (
    <svg width="71" height="33" viewBox="0 0 71 33">
      <rect x="1.5" y="1.5" width="60" height="29" rx="9" fill="none" stroke="#85888b" strokeWidth="3" />
      <rect x="6" y="6" width="41" height="20.5" rx="4" fill="#fff" />
      <path d="M65 10.5Q70 12 70 16Q70 20 65 21.5Z" fill="#85888b" />
    </svg>
  );
}

const Ticks = () => (
  <svg width="44" height="28" viewBox="0 0 44 28" fill="none" stroke="#72b9de" strokeWidth="3.8" strokeLinejoin="miter">
    <path d="M1.500 16L10.500 25L28.500 2M20.500 22L24 25L42.500 2" />
  </svg>
);

const Chevron = () => (
  <svg width="24" height="14" viewBox="0 0 24 14" fill="none" stroke="#c4c6c8" strokeWidth="2">
    <path d="M1 1.500L12 12.500L23 1.500" />
  </svg>
);

function CartEmoji() {
  return (
    <svg width="51" height="54" viewBox="0 0 51 54" fill="none" stroke="#a9adb0" strokeWidth="1.9" strokeLinecap="round">
      <path d="M47 4L42 29L34 38L28 37M42 29L45 44L8 42M5 9L42 8M5 15L41 15M6 21L40 21M8 27L39 27M5 8L10 29L38 29M13 8L16 29M20 8L22 29M28 8L28 29M35 8L34 29" />
      <path d="M45 3.500L49 2" stroke="#3b6fd0" strokeWidth="4.5" />
      <rect x="0" y="5" width="10" height="7" rx="1.5" fill="#3f7be0" stroke="none" />
      <path d="M9 45V50M44 45V50" stroke="#ddd" strokeWidth="5" />
    </svg>
  );
}

function MoneyBagEmoji() {
  return (
    <svg width="51" height="54" viewBox="0 0 51 54">
      <defs>
        <radialGradient id="sack" cx=".4" cy=".35" r=".75">
          <stop offset="0" stopColor="#f6d49b" /><stop offset=".6" stopColor="#d9a764" /><stop offset="1" stopColor="#8f6030" />
        </radialGradient>
      </defs>
      <path d="M20 15Q17 8 15 3Q18 0 21 3Q25 0 29 3Q32 0 35 4Q32 9 31 15Z" fill="#e3b878" />
      <path d="M19 16Q5 26 5 42Q5 53 25 53Q45 53 45 42Q45 26 32 16Z" fill="url(#sack)" />
      <path d="M18 15.500H33" stroke="#a8763c" strokeWidth="3" strokeLinecap="round" />
      <text x="25" y="45" textAnchor="middle" fontFamily="Inter" fontWeight="700" fontSize="24" fill="#5f3d12">$</text>
    </svg>
  );
}

function CardEmoji() {
  return (
    <svg width="51" height="54" viewBox="0 0 51 54">
      <rect x="0" y="12" width="50.5" height="34" rx="2" fill="#2d7a4d" />
      <rect x="0" y="12" width="50.5" height="4" fill="#4f9a6b" />
      <rect x="0" y="16" width="50.5" height="7" fill="#06150d" />
      <rect x="1" y="27" width="48.5" height="8.5" fill="#eef0dc" />
      <path d="M4 33L7 28L8 33L11 28L10 33Q13 29 14 33L17 30L17 33Q20 29 24 32" stroke="#6c7a63" strokeWidth=".8" fill="none" />
      <path d="M41 31H47" stroke="#555" strokeWidth="2.5" />
    </svg>
  );
}

function ClockEmoji() {
  return (
    <svg width="51" height="54" viewBox="0 0 51 54">
      <defs>
        <linearGradient id="face" x1="0" y1="0" x2="0" y2="1"><stop offset="0" stopColor="#fff" /><stop offset="1" stopColor="#dfe2e8" /></linearGradient>
        <linearGradient id="rim" x1="0" y1="0" x2="0" y2="1"><stop offset="0" stopColor="#8f98a3" /><stop offset="1" stopColor="#4c5563" /></linearGradient>
      </defs>
      <circle cx="25" cy="28" r="25" fill="url(#rim)" />
      <circle cx="25" cy="28" r="22" fill="url(#face)" stroke="#c8ccd2" />
      <path d="M25 11V28H36" stroke="#15181c" strokeWidth="2.6" fill="none" />
      <path d="M25 47V48M6 28H7M43 28H44" stroke="#9aa0a8" strokeWidth="2" />
    </svg>
  );
}

const Leaf = styled.span`
  width: 50px;
  height: 53px;
  margin-top: 1px;
  display: flex;
  flex-direction: column;
  align-items: center;
  background: linear-gradient(#5a88d8 0 18px, #f3f3f4 18px, #d9dadc);
  font-family: ${INTER};
`;

const LeafMonth = styled.span`
  height: 18px;
  padding-top: 2px;
  font-size: 13.5px;
  font-weight: 600;
  line-height: 16px;
  color: #e9f0fb;
`;

const LeafDay = styled.span`
  font-size: 35px;
  font-weight: 700;
  line-height: 35px;
  letter-spacing: -2.5px;
  margin-left: -2px;
  color: #46494f;
`;

const SCALLOPS = Array.from({ length: 16 }, (_, i) => {
  const c = 24.7 + i * 37.9;
  return `L${c - 13} 11Q${c - 11} 1 ${c} 1Q${c + 11} 1 ${c + 13} 11`;
}).join("");

const MARKS: [number, number][] = [[44, 212], [290, 212], [535, 212], [44, 458], [290, 458], [535, 458]];

function ReceiptImage() {
  return (
    <Receipt>
      <Paper>
        <Dots />
        <Success>
          <svg width="31" height="31" viewBox="0 0 31 31">
            <circle cx="15.5" cy="15.5" r="15" fill="#4dc26b" />
            <path d="M10.500 15.500L14 19L21 12" fill="none" stroke="#fff" strokeWidth="2.6" />
          </svg>
          Transaksi berhasil!
        </Success>
        <Title>{"Kirim Uang Rp130.000 ke Dasniyah Bt D••••n -\n083821665970"}</Title>
        <Total>
          <span>Total Bayar</span>
          <Amount>Rp130.000</Amount>
        </Total>
        <Method>
          <span>Metode Pembayaran</span>
          <MethodValue>Saldo DANA<br />(SmartPay)</MethodValue>
        </Method>
        <Divider />
        <Detail><span>Detail Penerima</span><Chevron /></Detail>
        <Detail><span>Detail Transaksi</span><Chevron /></Detail>
        <Watermark width="618" height="556" viewBox="0 0 618 556">
          {MARKS.map(([cx, cy], i) => (
            <g key={i} transform={`translate(${cx} ${cy})`} fill="#4aa3ea" opacity="0.13">
              <path fillRule="evenodd" d="M0 -28A28 28 0 1 0 0 28A28 28 0 1 0 0 -28ZM-2 -15Q6 -12 10 -16L16 -9Q9 0 9 8L4 15Q-4 10 -9 16L-16 8Q-8 0 -8 -8Z" />
              <text transform="translate(34 -19) rotate(-51)" fontFamily="Lato" fontWeight="700" fontSize="32" letterSpacing="10">DANA</text>
            </g>
          ))}
        </Watermark>
      </Paper>
      <Edge width="620" height="14" viewBox="0 0 620 14">
        <path d={`M1 0V8Q1 11 5 11${SCALLOPS}L615 11Q619 11 619 8V0Z`} fill="#fff" stroke="#e6e6e6" strokeWidth="1.5" />
        <path d="M2 0H618" stroke="#fff" strokeWidth="2" />
      </Edge>
      <NextPaper />
    </Receipt>
  );
}

const Spacer = styled.i<{ $w: number }>`
  width: ${(p) => p.$w}px;
`;

export default function App() {
  return (
    <Phone>
      <Global />
      <StatusBar>
        <StatusGroup $gap={19}>
          <Clock>19.52</Clock>
          <AppChip>
            <svg width="23" height="23" viewBox="0 0 24 24" fill="none" stroke="#56b766" strokeWidth="2.1">
              <path d="M2 22L3.600 16.700A10 10 0 1 1 7.400 20.500Z" />
              <path d="M8 7Q9.500 6.500 10 9L9.500 10.500Q11 13.500 13.700 14.500L15 13.300Q17.500 14 17 15.500Q15.500 18 12 16Q7.500 13.500 7 9.500Q7 8 8 7Z" fill="#56b766" stroke="none" />
            </svg>
          </AppChip>
          <svg width="32" height="8" viewBox="0 0 32 8" fill="#e6e8e8">
            <circle cx="3.3" cy="4" r="3.2" /><circle cx="15.5" cy="4" r="3.2" /><circle cx="28" cy="4" r="3.2" />
          </svg>
        </StatusGroup>
        <StatusGroup $gap={0}>
          <StatusGroup $gap={13}>
            <Bars weak />
            <Bars />
          </StatusGroup>
          <Spacer $w={9} />
          <Battery />
          <Spacer $w={5} />
          <Level>
            <LevelNumber>77</LevelNumber>
            <LevelSign>%</LevelSign>
          </Level>
        </StatusGroup>
      </StatusBar>

      <Header>
        <svg width="40" height="46" viewBox="0 0 40 46" fill="none" stroke="#f5f7f8" strokeWidth="5.5">
          <path d="M25 3.500L5 23L25 42.500M6 23H40" />
        </svg>
        <Avatar />
        <HeaderActions>
          <svg width="54" height="44" viewBox="0 0 54 44">
            <rect x="2.75" y="2.75" width="37.5" height="38.5" rx="2" fill="none" stroke="#f5f7f8" strokeWidth="5.5" />
            <path d="M42 19L52 9.500Q54 9 54 11V33Q54 35.500 52 34.500L42 25Z" fill="#f5f7f8" />
          </svg>
          <Spacer $w={77} />
          <svg width="48" height="48" viewBox="0 0 48 48" fill="none" stroke="#f5f7f8" strokeWidth="5" strokeLinejoin="round">
            <path d="M2.500 2.500H14.500L16 13L9 20.500Q14.500 31.500 28 39L35 32L45.500 34V45.500Q26 45 13 32.500Q2.500 20 2.500 2.500Z" />
          </svg>
          <Spacer $w={82} />
          <svg width="12" height="44" viewBox="0 0 12 44" fill="#f5f7f8">
            <circle cx="6" cy="6" r="5.6" /><circle cx="6" cy="22" r="5.6" /><circle cx="6" cy="38" r="5.6" />
          </svg>
        </HeaderActions>
      </Header>

      <Chat>
        <ChatWallpaper />
        <Messages>
          <Row>
            <Bubble $w={701} $h={1271} $corners="0 0 32px 32px" $pad="0 26px 0 0">
              <ReceiptImage />
              <Caption>
                <Line><Words $bold $ls={-0.6}>Website Pembayaran - Muslih Fvnky</Words></Line>
                <Line $h={37} />
                <Line $h={60}><Emoji>📌</Emoji><Words $bold $ls={-0.4}>ID Transaksi : MF-895926</Words></Line>
                <Line $h={60}>
                  <Words $w={18}>*</Words>
                  <EmojiArt $gap={8}><CartEmoji /></EmojiArt>
                  <Words $w={179} $ls={-0.3}>Produk</Words>
                  <Words $ls={-0.35}>: REQUEST FLM!! style</Words>
                </Line>
                <Line><Words $ls={-0.55}>karnaval lagu India pal pal de kepas *</Words></Line>
                <Line><EmojiArt><MoneyBagEmoji /></EmojiArt><Words $bold $w={192} $ls={-0.4}>Nominal</Words><Words $bold $ls={0.25}>: Rp115.000</Words></Line>
                <Line $h={60}><EmojiArt><CardEmoji /></EmojiArt><Words $bold $w={189} $ls={-0.6}>Metode</Words><Words $bold $ls={-0.5}>: DANA</Words></Line>
                <Line $h={60}><EmojiArt><ClockEmoji /></EmojiArt><Words $bold $w={176}>Jam</Words><Words $bold $ls={-0.1}>: 20:46:11 WIB</Words></Line>
                <Line $h={60}>
                  <EmojiArt><Leaf><LeafMonth>FEB</LeafMonth><LeafDay>24</LeafDay></Leaf></EmojiArt>
                  <Words $bold $w={186} $ls={-0.7}>Tanggal</Words>
                  <Words $bold $ls={-0.5}>: Kamis, 14 Agustus</Words>
                </Line>
                <Line><Words $bold>2025</Words></Line>
                <QuoteLine><QuoteBar /><Words $bold $lh={36} $ls={-0.6} $color="#a2a7a9">Harap kirim screenshot transaksi</Words></QuoteLine>
              </Caption>
              <Meta $top={25} $right={1}>19.46</Meta>
            </Bubble>
            <ForwardButton aria-label="Forward">
              <svg width="54" height="40" viewBox="0 0 54 40" fill="none" stroke="#fff" strokeWidth="5" strokeLinecap="round" strokeLinejoin="round">
                <path d="M3 36V29Q3 17 15 17H38M25 4L38 17L25 29.500M38 4L51 17L38 29.500" />
              </svg>
            </ForwardButton>
          </Row>

          <Row $top={6}>
            <Bubble $w={288} $h={81} $row $pad="11px 21px 9px 25px">
              <Words $ls={-0.5}>Udah kk</Words>
              <Meta>19.46</Meta>
            </Bubble>
          </Row>
          <Row $top={6}>
            <Bubble $w={662} $h={92} $row $pad="17px 21px 6px 25px">
              <Line>
                <Words $ls={-0.35}>Sengaja Saya kasih lebih kk</Words>
                <Emoji $gap={0}>🙏</Emoji>
              </Line>
              <Meta>19.46</Meta>
            </Bubble>
          </Row>

          <Row $top={26} $mine>
            <Bubble $mine $w={883} $h={137} $corners="32px 0 32px 32px" $pad="9.5px 22px 0 25px">
              <Tail $side="right" width="20" height="32" viewBox="0 0 20 32"><path d="M0 0H14Q21 1 18 7L0 31Z" fill="#244a39" /></Tail>
              <Line><Words $ls={-0.35} $color="#effbf4">alhamdulilah masuk KA terimakasih banya btw itu</Words></Line>
              <Line>
                <Words $w={424} $ls={-0.3} $color="#effbf4">kelebihann astaghfirullah </Words>
                <Emoji $gap={2}>😭</Emoji><Emoji $gap={0}>😭</Emoji>
              </Line>
              <Meta $top={-18}>19.46<Ticks /></Meta>
            </Bubble>
          </Row>

          <Row $top={7} $mine>
            <Bubble $mine $w={510} $h={231}>
              <Reply>
                <ReplyBar />
                <ReplyText>
                  <Words $size={30} $lh={42} $ls={0.1} $color="#9db1a7">Sengaja Saya kasih lebih kk</Words>
                  <Emoji $size={30} $w={38} $gap={0} $drop={3}>🙏</Emoji>
                </ReplyText>
              </Reply>
              <Line $margin="18px 0 0 25px">
                <Words $w={97} $ls={-0.5} $color="#effbf4">wehh </Words><Emoji>😭</Emoji>
              </Line>
              <Meta $top={-19} $right={22}>19.47<Ticks /></Meta>
            </Bubble>
          </Row>

          <Row $top={26}>
            <Bubble $w={451} $h={81} $row $corners="0 32px 32px 32px" $pad="11px 21px 9px 25px">
              <Tail $side="left" width="20" height="32" viewBox="0 0 20 32"><path d="M20 0H6Q-1 1 2 7L20 23Z" fill="#22272b" /></Tail>
              <Words $ls={-0.5}>Nggak apa-apa kk</Words>
              <Meta>19.47</Meta>
            </Bubble>
          </Row>

          <ScrollDown aria-label="Scroll to latest">
            <svg width="31" height="36" viewBox="0 0 31 36" fill="none" stroke="#9a9fa2" strokeWidth="5" strokeLinejoin="round" strokeLinecap="round">
              <path d="M3 3L15.500 15L28 3M3 19.500L15.500 31.500L28 19.500" />
            </svg>
          </ScrollDown>
        </Messages>

        <Composer>
          <InputBox>
            <svg width="56" height="56" viewBox="0 0 56 56" fill="none" stroke="#8a9094" strokeWidth="5">
              <path d="M20 3.500H36Q52.500 3.500 52.500 20V35L34 52.500H20Q3.500 52.500 3.500 36V20Q3.500 3.500 20 3.500Z" />
              <path d="M32 52V43Q32 32.500 43 32.500H52" />
              <path d="M15.500 33Q26 38 35 32.500L32 41Q19 44 15.500 33Z" fill="#8a9094" stroke="none" />
              <circle cx="18.5" cy="20" r="4" fill="#8a9094" stroke="none" />
              <circle cx="37.5" cy="20" r="4" fill="#8a9094" stroke="none" />
            </svg>
            <Caret />
            <Placeholder>Ketik pesan</Placeholder>
            <svg width="34" height="54" viewBox="0 0 34 54" fill="none" stroke="#8a9094" strokeWidth="4.6" strokeLinecap="round">
              <path d="M31.500 14V38Q31 51.500 17 51.500Q3 51.500 2.500 38V13Q3.500 2.500 13 2.500Q23 2.500 23.500 13V36Q23 42 17 42Q11.500 42 11 36V14" />
            </svg>
            <Spacer $w={80} />
            <svg width="54" height="48" viewBox="0 0 54 48" fill="none" stroke="#8a9094" strokeWidth="5" strokeLinejoin="round">
              <path d="M2.500 8H14L19 2.500H35L40 8H51.500V45.500H2.500Z" />
              <circle cx="27" cy="26.5" r="9.5" />
            </svg>
          </InputBox>
          <MicButton aria-label="Record">
            <svg width="38" height="52" viewBox="0 0 38 52">
              <rect x="11" y="0" width="16" height="32" rx="8" fill="#0a1a10" />
              <path d="M2.500 24Q2.500 40 19 40Q35.500 40 35.500 24M19 40V52" fill="none" stroke="#0a1a10" strokeWidth="4.8" />
            </svg>
          </MicButton>
        </Composer>
      </Chat>

      <NavBar><NavPill /></NavBar>

      <Redaction width="1080" height="2400" viewBox="0 0 1080 2400">
        <path fill="#e2472a" d="M48 180C48 160 62 147 83 146Q98 146 112 143Q136 139 158 133C185 126 205 121 234 116Q280 108 344 98L448 79C480 73 510 74 522 81Q538 87 543 98Q570 96 578 107Q587 118 586 132H620C640 134 654 148 653 164L675 161C698 160 713 177 713 194C713 212 702 226 685 227L579 241L448 257L370 264C320 268 280 255 255 243Q222 226 209 212L138 218L83 222C66 221 58 212 54 202Z" />
        <path d="M323 196.500Q340 198.500 362 197.500" fill="none" stroke="#5a2018" strokeWidth="1.4" />
        <rect x="860" y="1915" width="5" height="19" fill="#d5d2f5" />
        <path fill="#e2472a" d="M554 1926C554 1908 566 1895 584 1894L700 1887L745 1884L798 1880Q812 1876 824 1869C852 1858 873 1875 873 1899Q873 1916 860 1926Q835 1941 808 1946L745 1950L590 1960C566 1960 554 1944 554 1926Z" />
      </Redaction>
    </Phone>
  );
}
